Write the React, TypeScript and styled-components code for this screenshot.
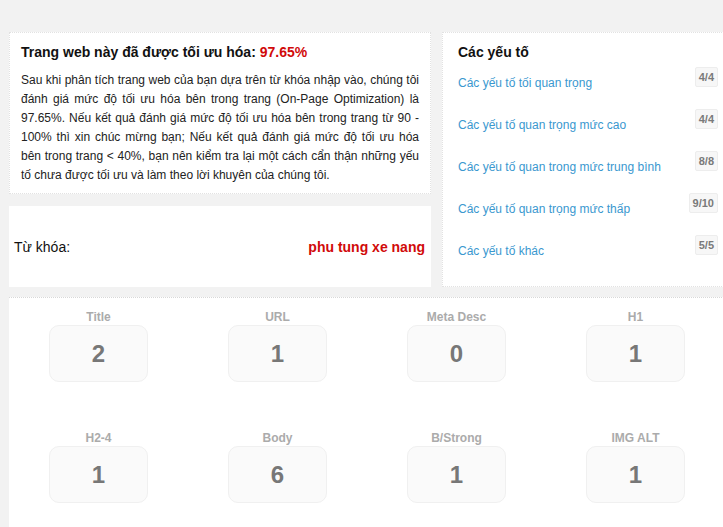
import React from "react";
import styled, { createGlobalStyle } from "styled-components";

const GlobalStyle = createGlobalStyle`
  html, body {
    margin: 0;
    padding: 0;
    background: #f2f2f2;
    overflow: hidden;
  }
  body {
    font-family: "Liberation Sans", Arial, sans-serif;
    color: #222;
  }
`;

const Page = styled.div`
  width: 736px;
  padding: 32px 0 0 9px;
  box-sizing: border-box;
`;

const TopRow = styled.div`
  display: flex;
  gap: 11px;
  align-items: stretch;
`;

const LeftCol = styled.div`
  width: 422px;
  display: flex;
  flex-direction: column;
  gap: 12px;
`;

const Card = styled.div`
  background: #fff;
  border: 1px dotted #e2e2e2;
  box-sizing: border-box;
`;

const SummaryCard = styled(Card)`
  height: 162px;
  padding: 11px 11px 0 11px;
`;

const SummaryTitle = styled.h2`
  margin: 0;
  font-size: 14px;
  line-height: 16px;
  font-weight: bold;
  color: #111;
`;

const Red = styled.span`
  color: #d10a0a;
`;

const Paragraph = styled.p`
  margin: 11px 0 0;
  font-size: 12px;
  line-height: 19px;
  color: #222;
  text-align: justify;
`;

const KeywordCard = styled(Card)`
  height: 81px;
  display: flex;
  align-items: center;
  justify-content: space-between;
  padding: 0 5px 0 4px;
  font-size: 14px;
  border-color: #fff;
`;

const KeywordLabel = styled.span`
  color: #111;
`;

const KeywordValue = styled.span`
  color: #d10a0a;
  font-weight: bold;
`;

const FactorCard = styled(Card)`
  width: 292px;
  height: 255px;
  padding: 11px 15px 0 15px;
`;

const FactorTitle = styled.h3`
  margin: 0 0 6px;
  font-size: 14px;
  line-height: 17px;
  font-weight: bold;
  color: #111;
`;

const FactorRow = styled.div`
  display: flex;
  justify-content: space-between;
  align-items: flex-start;
  height: 42px;
`;

const FactorLink = styled.a`
  margin-top: 6px;
  font-size: 12px;
  line-height: 20px;
  color: #3a98cf;
  text-decoration: none;
`;

const Badge = styled.span`
  display: inline-block;
  height: 20px;
  line-height: 18px;
  box-sizing: border-box;
  padding: 0 3px;
  font-size: 11px;
  font-weight: bold;
  color: #7a7a7a;
  background: #f7f7f7;
  border: 1px solid #ededed;
  border-radius: 2px;
`;

const StatsPanel = styled.div`
  margin-top: 10px;
  background: #fff;
  border-top: 1px dotted #d8d8d8;
  height: 260px;
  display: grid;
  grid-template-columns: repeat(4, 179px);
  grid-auto-rows: 74px;
  row-gap: 47px;
  padding-top: 11px;
  box-sizing: border-box;
`;

const Stat = styled.div`
  display: flex;
  flex-direction: column;
  align-items: center;
`;

const StatLabel = styled.div`
  font-size: 12px;
  line-height: 16px;
  font-weight: bold;
  color: #ababab;
`;

const StatBox = styled.div`
  width: 99px;
  height: 57px;
  box-sizing: border-box;
  border: 1px solid #f0f0f0;
  border-radius: 10px;
  background: #fafafa;
  display: flex;
  align-items: center;
  justify-content: center;
  font-size: 24px;
  font-weight: bold;
  color: #777;
`;

const factors = [
  { label: "Các yếu tố tối quan trọng", value: "4/4" },
  { label: "Các yếu tố quan trọng mức cao", value: "4/4" },
  { label: "Các yếu tố quan trong mức trung bình", value: "8/8" },
  { label: "Các yếu tố quan trọng mức thấp", value: "9/10" },
  { label: "Các yếu tố khác", value: "5/5" },
];

const stats = [
  { label: "Title", value: 2 },
  { label: "URL", value: 1 },
  { label: "Meta Desc", value: 0 },
  { label: "H1", value: 1 },
  { label: "H2-4", value: 1 },
  { label: "Body", value: 6 },
  { label: "B/Strong", value: 1 },
  { label: "IMG ALT", value: 1 },
];

export default function App() {
  return (
    <>
      <GlobalStyle />
      <Page>
        <TopRow>
          <LeftCol>
            <SummaryCard>
              <SummaryTitle>
                Trang web này đã được tối ưu hóa: <Red>97.65%</Red>
              </SummaryTitle>
              <Paragraph>
                Sau khi phân tích trang web của bạn dựa trên từ khóa nhập vào, chúng tôi
                đánh giá mức độ tối ưu hóa bên trong trang (On-Page Optimization) là
                97.65%. Nếu kết quả đánh giá mức độ tối ưu hóa bên trong trang từ 90 -
                100% thì xin chúc mừng bạn; Nếu kết quả đánh giá mức độ tối ưu hóa
                bên trong trang &lt; 40%, bạn nên kiểm tra lại một cách cẩn thận những yếu
                tố chưa được tối ưu và làm theo lời khuyên của chúng tôi.
              </Paragraph>
            </SummaryCard>
            <KeywordCard>
              <KeywordLabel>Từ khóa:</KeywordLabel>
              <KeywordValue>phu tung xe nang</KeywordValue>
            </KeywordCard>
          </LeftCol>
          <FactorCard>
            <FactorTitle>Các yếu tố</FactorTitle>
            {factors.map((f) => (
              <FactorRow key={f.label}>
                <FactorLink href="#">{f.label}</FactorLink>
                <Badge>{f.value}</Badge>
              </FactorRow>
            ))}
          </FactorCard>
        </TopRow>
        <StatsPanel>
          {stats.map((s) => (
            <Stat key={s.label}>
              <StatLabel>{s.label}</StatLabel>
              <StatBox>{s.value}</StatBox>
            </Stat>
          ))}
        </StatsPanel>
      </Page>
    </>
  );
}
